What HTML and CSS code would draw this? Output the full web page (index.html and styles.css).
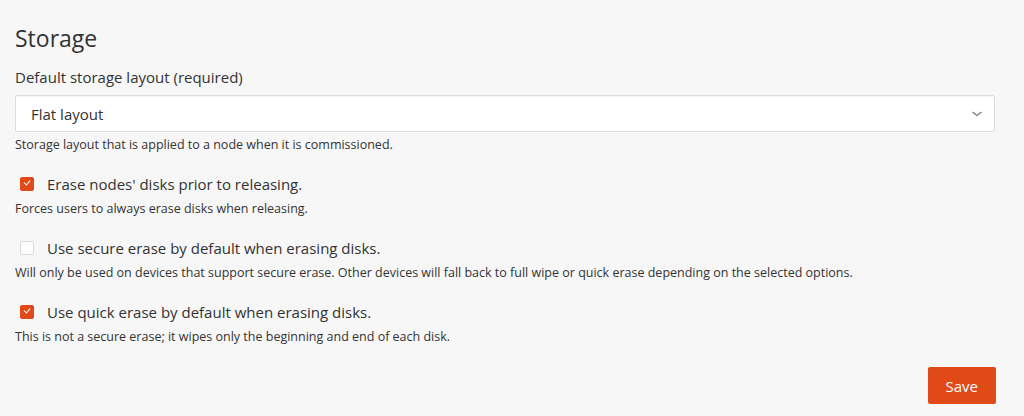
FILE: index.html
```html
<!DOCTYPE html>
<html lang="en">
<head>
<meta charset="UTF-8" />
<meta name="viewport" content="width=device-width, initial-scale=1" />
<title>Storage</title>
<link rel="stylesheet" href="styles.css">
</head>
<body>
  <form class="settings">
    <h2 class="settings-title">Storage</h2>

    <div class="field">
      <label class="field-label" for="layout">Default storage layout (required)</label>
      <div class="select-wrap">
        <select id="layout" class="select">
          <option>Flat layout</option>
        </select>
        <svg class="select-chevron" viewBox="0 0 12 8" aria-hidden="true">
          <path d="M1.5 2 L6 5.5 L10.5 2" />
        </svg>
      </div>
      <p class="help">Storage layout that is applied to a node when it is commissioned.</p>
    </div>

    <div class="field">
      <label class="check">
        <input type="checkbox" checked />
        <span class="check-box"></span>
        <span class="check-label">Erase nodes' disks prior to releasing.</span>
      </label>
      <p class="help">Forces users to always erase disks when releasing.</p>
    </div>

    <div class="field">
      <label class="check">
        <input type="checkbox" />
        <span class="check-box"></span>
        <span class="check-label">Use secure erase by default when erasing disks.</span>
      </label>
      <p class="help">Will only be used on devices that support secure erase. Other devices will fall back to full wipe or quick erase depending on the selected options.</p>
    </div>

    <div class="field">
      <label class="check">
        <input type="checkbox" checked />
        <span class="check-box"></span>
        <span class="check-label">Use quick erase by default when erasing disks.</span>
      </label>
      <p class="help">This is not a secure erase; it wipes only the beginning and end of each disk.</p>
    </div>

    <div class="actions">
      <button type="button" class="btn-save">Save</button>
    </div>
  </form>
</body>
</html>
```

FILE: styles.css
```css
:root {
  --bg: #f7f7f7;
  --text: #333;
  --border: #ddd;
  --brand: #e04a16;
}
html, body {
  margin: 0;
  background: var(--bg);
  color: var(--text);
  font-family: "Open Sans", sans-serif;
}
.settings {
  padding: 23px 29px 0 15px;
}
.settings-title {
  font-size: 23px;
  font-weight: 400;
  line-height: 30px;
  margin: 0 0 13px 0;
}
.field {
  margin-bottom: 18px;
}
.field-label {
  display: block;
  font-size: 15px;
  line-height: 22px;
  margin-bottom: 7px;
}
.select-wrap {
  position: relative;
}
.select {
  -webkit-appearance: none;
  appearance: none;
  display: block;
  width: 100%;
  height: 37px;
  padding: 0 15px;
  border: 1px solid var(--border);
  border-radius: 2px;
  background: #fff;
  color: var(--text);
  font-family: inherit;
  font-size: 15px;
  box-shadow: inset 0 1px 1px rgba(0, 0, 0, 0.04);
}
.select-chevron {
  position: absolute;
  right: 12px;
  top: 15px;
  width: 12px;
  height: 8px;
  fill: none;
  stroke: #777;
  stroke-width: 1.3;
}
.help {
  font-size: 12.5px;
  line-height: 18px;
  margin: 4px 0 0 0;
}
.check {
  display: flex;
  align-items: center;
  gap: 13px;
  padding-left: 5px;
  line-height: 24px;
  font-size: 15px;
}
.check input {
  display: none;
}
.check-box {
  width: 12px;
  height: 12px;
  border: 1px solid #d9d9d9;
  border-radius: 2px;
  background: #fff;
  position: relative;
}
.check input:checked + .check-box {
  background: var(--brand);
  border-color: var(--brand);
}
.check input:checked + .check-box::after {
  content: "";
  position: absolute;
  left: 3px;
  top: 2px;
  width: 5px;
  height: 3px;
  border-left: 1.5px solid #fff;
  border-bottom: 1.5px solid #fff;
  transform: rotate(-50deg);
}
.actions {
  display: flex;
  justify-content: flex-end;
  margin: 21px -1px 0 0;
}
.btn-save {
  background: var(--brand);
  color: #fff;
  border: none;
  border-radius: 2px;
  height: 37px;
  padding: 0 18px;
  font-family: inherit;
  font-size: 15px;
}
```
